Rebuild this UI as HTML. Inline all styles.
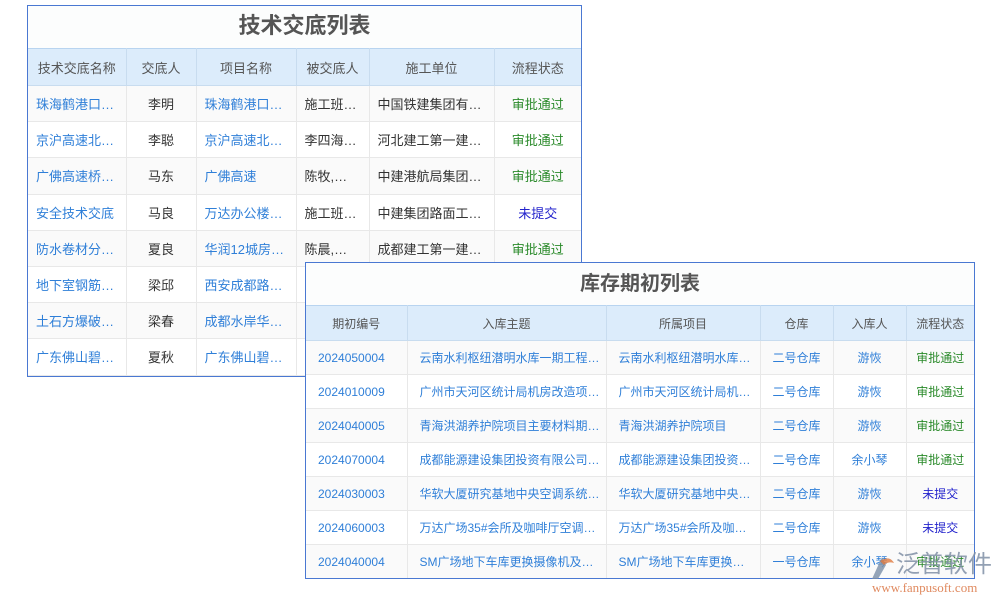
<!DOCTYPE html>
<html><head><meta charset="utf-8"><style>
*{margin:0;padding:0;box-sizing:border-box}
body{width:1000px;height:600px;background:#fff;position:relative;overflow:hidden;font-family:"Liberation Sans","Noto Sans CJK SC",sans-serif;font-size:13px;color:#333}
.box{position:absolute;background:#fff;border:1px solid #4a78d2;overflow:hidden}
.title{text-align:center;font-weight:bold;color:#555;background:#fcfdfd}
table{border-collapse:collapse;table-layout:fixed;width:100%}
th{background:#dcecfb;color:#555;font-weight:normal;border-right:1px solid #c8dcef;border-top:1px solid #b8d4f0;border-bottom:1px solid #c8dcef}
td{border-right:1px solid #e8e8e8;border-bottom:1px solid #e8e8e8;white-space:nowrap;overflow:hidden}
th:last-child,td:last-child{border-right:none}
tr:nth-child(even) td{background:#fafafa}
.l{color:#2f7fd8}.g{color:#2a8a2a}.p{color:#2323cc}
td.c{text-align:center;padding-left:0 !important}
#t1{left:27px;top:5px;width:555px;height:372px}
#t1 .title{height:42px;line-height:40px;font-size:22px}
#t1 th{height:37px}#t1 td{height:36.2px;padding-left:8px}
#t2{left:305px;top:262px;width:670px;height:317px}
#t2 .title{height:42px;line-height:42px;font-size:20px}
#t2 th{height:35px;font-size:12px}#t2 td{height:34px;padding-left:12px;font-size:12px}
</style></head><body>
<div class="box" id="t1"><div class="title">技术交底列表</div>
<table><colgroup><col style="width:98px"><col style="width:70px"><col style="width:100px"><col style="width:73px"><col style="width:125px"><col></colgroup>
<tr><th>技术交底名称</th><th>交底人</th><th>项目名称</th><th>被交底人</th><th>施工单位</th><th>流程状态</th></tr>
<tr><td class="l">珠海鹤港口…</td><td class="c">李明</td><td class="l">珠海鹤港口…</td><td>施工班…</td><td>中国铁建集团有…</td><td class="c g">审批通过</td></tr>
<tr><td class="l">京沪高速北…</td><td class="c">李聪</td><td class="l">京沪高速北…</td><td>李四海…</td><td>河北建工第一建…</td><td class="c g">审批通过</td></tr>
<tr><td class="l">广佛高速桥…</td><td class="c">马东</td><td class="l">广佛高速</td><td>陈牧,…</td><td>中建港航局集团…</td><td class="c g">审批通过</td></tr>
<tr><td class="l">安全技术交底</td><td class="c">马良</td><td class="l">万达办公楼…</td><td>施工班…</td><td>中建集团路面工…</td><td class="c p">未提交</td></tr>
<tr><td class="l">防水卷材分…</td><td class="c">夏良</td><td class="l">华润12城房…</td><td>陈晨,…</td><td>成都建工第一建…</td><td class="c g">审批通过</td></tr>
<tr><td class="l">地下室钢筋…</td><td class="c">梁邱</td><td class="l">西安成都路…</td><td></td><td></td><td></td></tr>
<tr><td class="l">土石方爆破…</td><td class="c">梁春</td><td class="l">成都水岸华…</td><td></td><td></td><td></td></tr>
<tr><td class="l">广东佛山碧…</td><td class="c">夏秋</td><td class="l">广东佛山碧…</td><td></td><td></td><td></td></tr>
</table></div>
<div class="box" id="t2"><div class="title">库存期初列表</div>
<table><colgroup><col style="width:101px"><col style="width:199px"><col style="width:154px"><col style="width:73px"><col style="width:73px"><col></colgroup>
<tr><th>期初编号</th><th>入库主题</th><th>所属项目</th><th>仓库</th><th>入库人</th><th>流程状态</th></tr>
<tr><td class="l">2024050004</td><td class="l">云南水利枢纽潜明水库一期工程…</td><td class="l">云南水利枢纽潜明水库…</td><td class="c l">二号仓库</td><td class="c l">游恢</td><td class="c g">审批通过</td></tr>
<tr><td class="l">2024010009</td><td class="l">广州市天河区统计局机房改造项…</td><td class="l">广州市天河区统计局机…</td><td class="c l">二号仓库</td><td class="c l">游恢</td><td class="c g">审批通过</td></tr>
<tr><td class="l">2024040005</td><td class="l">青海洪湖养护院项目主要材料期…</td><td class="l">青海洪湖养护院项目</td><td class="c l">二号仓库</td><td class="c l">游恢</td><td class="c g">审批通过</td></tr>
<tr><td class="l">2024070004</td><td class="l">成都能源建设集团投资有限公司…</td><td class="l">成都能源建设集团投资…</td><td class="c l">二号仓库</td><td class="c l">余小琴</td><td class="c g">审批通过</td></tr>
<tr><td class="l">2024030003</td><td class="l">华软大厦研究基地中央空调系统…</td><td class="l">华软大厦研究基地中央…</td><td class="c l">二号仓库</td><td class="c l">游恢</td><td class="c p">未提交</td></tr>
<tr><td class="l">2024060003</td><td class="l">万达广场35#会所及咖啡厅空调…</td><td class="l">万达广场35#会所及咖…</td><td class="c l">二号仓库</td><td class="c l">游恢</td><td class="c p">未提交</td></tr>
<tr><td class="l">2024040004</td><td class="l">SM广场地下车库更换摄像机及…</td><td class="l">SM广场地下车库更换…</td><td class="c l">一号仓库</td><td class="c l">余小琴</td><td class="c g">审批通过</td></tr>
</table></div>
<svg style="position:absolute;left:868px;top:553px" width="30" height="28" viewBox="0 0 30 28"><path d="M4 26 L14 4 L18 12 L10 26Z" fill="#7a8fa8" opacity=".8"/><path d="M12 8 Q22 2 26 10 Q20 8 16 12Z" fill="#e07a40" opacity=".8"/></svg>
<div style="position:absolute;left:896px;top:551px;font-size:24px;line-height:28px;color:#8090a6;opacity:.85;white-space:nowrap">泛普软件</div>
<div style="position:absolute;left:872px;top:580px;font-family:'Liberation Serif',serif;font-size:13px;color:#e08a60;white-space:nowrap">www.fanpusoft.com</div>
</body></html>
